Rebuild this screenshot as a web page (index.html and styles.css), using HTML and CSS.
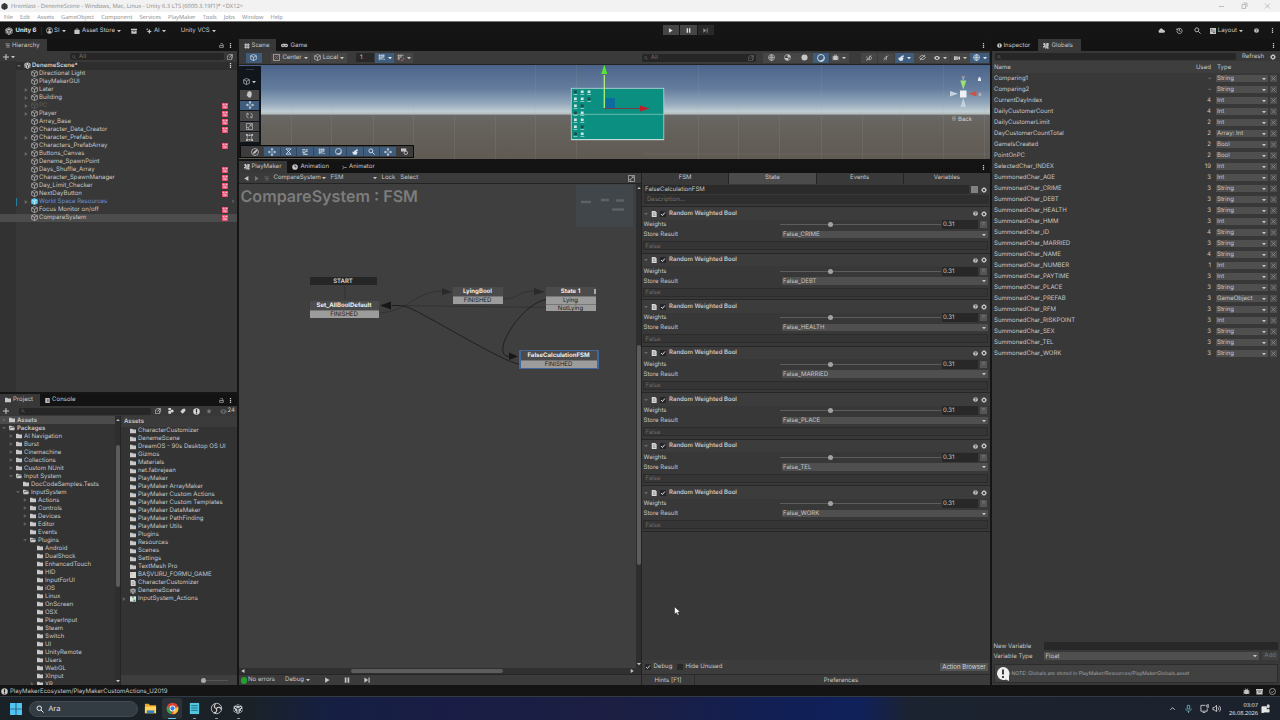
FILE: index.html
```
<!DOCTYPE html>
<html lang="en">
<head>
  <meta charset="UTF-8">
  <meta name="viewport" content="width=device-width, initial-scale=1.0">
  <title>Hremlast - DenemeScene</title>
  <link rel="stylesheet" href="styles.css">
</head>
<body>
  <!-- Icon sprite -->
  <svg class="sprite">
    <symbol id="unity" viewBox="0 0 16 16"><path fill="currentColor" d="M8 0l7 4v8l-7 4-7-4V4z"/><path stroke="#222" stroke-width="1.6" fill="none" d="M8 8v6M8 8L3 5M8 8l5-3M5 3l3-1.500 3 1.500M2.500 8v3l3 2M13.500 8v3l-3 2"/></symbol>
    <symbol id="cube" viewBox="0 0 16 16"><path fill="none" stroke="currentColor" stroke-width="1.500" d="M8 1l6.500 3v8L8 15l-6.500-3V4zM1.500 4L8 7.500 14.500 4M8 7.500V15"/></symbol>
    <symbol id="prefab" viewBox="0 0 16 16"><path fill="#5fc8ee" d="M8 0l7.500 3.500v9L8 16 .5 12.500v-9z"/><path fill="none" stroke="#d5f3ff" stroke-width="1.800" d="M3 5l5 2.500L13 5M8 7.500V14"/></symbol>
    <symbol id="folder" viewBox="0 0 16 16"><path fill="currentColor" d="M0 2h6l2 2h8v10H0z"/></symbol>
    <symbol id="folder-open" viewBox="0 0 16 16"><path fill="currentColor" d="M0 2h6l2 2h6v2H3L1.500 12 0 14zM4 7h12l-2 7H1.500z"/></symbol>
    <symbol id="pm" viewBox="0 0 16 16"><path fill="currentColor" d="M1 0h5v3h3V0h6v9h-3l4 4-3 3-4-4v3H6v-3H0V8h3V5H1z"/><path stroke="#444" d="M6 5h4M6 8h5M5 11h3"/></symbol>
    <symbol id="pm-red" viewBox="0 0 16 16"><path fill="#e8476d" d="M0 0h16v16H0z"/><path fill="#f6d5dc" d="M2 2h3v3H2zM7 2h2v3H7zM11 2h3v4h-3zM2 7h7v2H2zM4 11h3v3H4zM9 8l5 4-3 .5-2 2z"/></symbol>
    <symbol id="search" viewBox="0 0 16 16"><path fill="none" stroke="currentColor" stroke-width="2" d="M10 10l5 5M11 6.500a4.500 4.500 0 11-9 0 4.500 4.500 0 019 0z"/></symbol>
    <symbol id="gear" viewBox="0 0 16 16"><circle cx="8" cy="8" r="4.500" fill="none" stroke="currentColor" stroke-width="3"/><path stroke="currentColor" stroke-width="2.400" d="M8 0v3M8 13v3M0 8h3M13 8h3M2.300 2.300l2 2M11.700 11.700l2 2M13.700 2.300l-2 2M4.300 11.700l-2 2"/></symbol>
    <symbol id="help" viewBox="0 0 16 16"><circle cx="8" cy="8" r="7.500" fill="currentColor"/><path fill="none" stroke="#222" stroke-width="2" d="M5.500 6.500C5.500 3 10.500 3 10.500 6c0 2-2.500 1.500-2.500 4M8 11v2"/></symbol>
    <symbol id="info" viewBox="0 0 16 16"><circle cx="8" cy="8" r="7.500" fill="currentColor"/><path stroke="#222" stroke-width="2.600" d="M8 3v6M8 10.500v2.500"/></symbol>
    <symbol id="dots" viewBox="0 0 16 16"><path fill="currentColor" d="M6 0h4v4H6zM6 6h4v4H6zM6 12h4v4H6z"/></symbol>
    <symbol id="lock" viewBox="0 0 16 16"><path fill="none" stroke="currentColor" stroke-width="2" d="M2 8h12v6H2zM4 4c1-4 8-4 8 0v4"/></symbol>
    <symbol id="down" viewBox="0 0 16 16"><path fill="currentColor" d="M0 4h16l-8 9z"/></symbol>
    <symbol id="right" viewBox="0 0 16 16"><path fill="currentColor" d="M3 0l12 8-12 8z"/></symbol>
    <symbol id="left" viewBox="0 0 16 16"><path fill="currentColor" d="M14 0L1 8l13 8z"/></symbol>
    <symbol id="up" viewBox="0 0 16 16"><path fill="currentColor" d="M1 12h14L8 4z"/></symbol>
    <symbol id="lines" viewBox="0 0 16 16"><path stroke="currentColor" stroke-width="2" d="M1 3h14M4 8h11M4 13h11"/></symbol>
    <symbol id="plus" viewBox="0 0 16 16"><path stroke="currentColor" stroke-width="2.800" d="M8 0v16M0 8h16"/></symbol>
    <symbol id="user" viewBox="0 0 16 16"><circle cx="8" cy="8" r="6.800" fill="none" stroke="currentColor" stroke-width="1.700"/><circle cx="8" cy="6" r="2.600" fill="currentColor"/><path fill="currentColor" d="M3 12c2-4 8-4 10 0l-5 3z"/></symbol>
    <symbol id="bag" viewBox="0 0 16 16"><path fill="currentColor" d="M1 5h14v11H1z"/><path fill="none" stroke="currentColor" stroke-width="2" d="M5 6c0-6 6-6 6 0"/></symbol>
    <symbol id="archive" viewBox="0 0 16 16"><path fill="currentColor" d="M0 2h16v4H0zM1 7h14v8H1z"/><path stroke="#222" stroke-width="1.500" d="M5 9h6"/></symbol>
    <symbol id="spark" viewBox="0 0 16 16"><path fill="currentColor" d="M9 2l2 5 5 2-5 2-2 5-2-5-5-2 5-2zM3 0l1 2 2 1-2 1-1 2-1-2-2-1 2-1z"/></symbol>
    <symbol id="play" viewBox="0 0 16 16"><path fill="currentColor" d="M3 1l12 7-12 7z"/></symbol>
    <symbol id="pause" viewBox="0 0 16 16"><path fill="currentColor" d="M2 1h4.500v14H2zM9.500 1H14v14H9.500z"/></symbol>
    <symbol id="step" viewBox="0 0 16 16"><path fill="currentColor" d="M1 1l10 7-10 7zM12 1h3v14h-3z"/></symbol>
    <symbol id="cloud" viewBox="0 0 16 16"><path fill="currentColor" d="M3 13a3.500 3.500 0 010-6c1-5 8-5 9 0 5 0 5 6 1 6z"/></symbol>
    <symbol id="history" viewBox="0 0 16 16"><path fill="none" stroke="currentColor" stroke-width="1.700" d="M2 3v4h4M2.500 6.500A6 6 0 112 9M8 4.500V9l3 1.500"/></symbol>
    <symbol id="layers" viewBox="0 0 16 16"><path fill="currentColor" d="M0 0h16v16H0z"/><path stroke="#333" stroke-width="1.500" d="M2 4h5M2 8h12M8 12h6"/></symbol>
    <symbol id="grid" viewBox="0 0 16 16"><path fill="none" stroke="currentColor" stroke-width="1.500" d="M1 3h14M1 7h14M1 11h8M4 1v13M9 1v11M13 1v7M10 14l3-3 3 3"/></symbol>
    <symbol id="magnet" viewBox="0 0 16 16"><path fill="none" stroke="currentColor" stroke-width="1.500" d="M1 3h14M1 7h9M1 11h6M4 1v13M9 1v7"/><path fill="none" stroke="#cf6257" stroke-width="2" d="M9 14l3 1 3-3-1-4"/></symbol>
    <symbol id="gamepad" viewBox="0 0 16 16"><path fill="currentColor" d="M4 4h8a4 4 0 010 8c-2 0-2-2-4-2s-2 2-4 2a4 4 0 010-8z"/><circle cx="4.500" cy="8" r="1.500" fill="#222"/><circle cx="11.500" cy="8" r="1.500" fill="#222"/></symbol>
    <symbol id="scene" viewBox="0 0 16 16"><path stroke="currentColor" stroke-width="2" d="M4 1v14M8 1v14M12 1v14M1 4h14M1 8h14M1 12h14"/></symbol>
    <symbol id="clock" viewBox="0 0 16 16"><circle cx="8" cy="8" r="7.500" fill="currentColor"/><path fill="none" stroke="#222" stroke-width="2" d="M8 3v5h4"/></symbol>
    <symbol id="animator" viewBox="0 0 16 16"><path fill="none" stroke="currentColor" stroke-width="2" d="M1 3l6 5-6 5M7 8h8"/></symbol>
    <symbol id="console" viewBox="0 0 16 16"><path fill="currentColor" d="M1 0h14v16H1z"/><path stroke="#222" stroke-width="1.700" d="M6 4h6M6 8h6M6 12h6"/></symbol>
    <symbol id="window" viewBox="0 0 16 16"><path fill="none" stroke="currentColor" stroke-width="1.600" d="M4 1h11v11M1 5v10h11V8M1 5h5M6 10l7-7M9 3h4v4"/></symbol>
    <symbol id="tag" viewBox="0 0 16 16"><path fill="currentColor" d="M8 2h6v6l-7 7-6-6z"/></symbol>
    <symbol id="shapes" viewBox="0 0 16 16"><path fill="currentColor" d="M1 0h7v6H1zM1 8h7v7H1z"/><circle cx="11" cy="8" r="4" fill="currentColor"/></symbol>
    <symbol id="star" viewBox="0 0 16 16"><path fill="currentColor" d="M8 1l2 5 5 .5-4 3.500 1 5-4-2.500L4 15l1-5-4-3.500L6 6z"/></symbol>
    <symbol id="eye" viewBox="0 0 16 16"><path fill="currentColor" d="M0 8c4-7 12-7 16 0-4 7-12 7-16 0z"/><circle cx="8" cy="8" r="2.500" fill="#333"/></symbol>
    <symbol id="eye-off" viewBox="0 0 16 16"><path fill="none" stroke="currentColor" stroke-width="1.800" d="M1 8c4-6 10-6 14 0-4 6-10 6-14 0zM2 14L14 2"/></symbol>
    <symbol id="hand" viewBox="0 0 16 16"><path fill="currentColor" d="M3 8V3h2V1h2V0h2v1h2v2h2v6l-2 6H6L1 9l1-1z"/></symbol>
    <symbol id="move" viewBox="0 0 16 16"><path stroke="currentColor" stroke-width="1.600" d="M8 2v4.500M8 9.500V14M2 8h4.500M9.500 8H14"/><path fill="currentColor" d="M8 0l3 3H5zM8 16l3-3H5zM0 8l3-3v6zM16 8l-3-3v6z"/></symbol>
    <symbol id="rotate" viewBox="0 0 16 16"><path fill="none" stroke="currentColor" stroke-width="1.600" d="M6 14A6.300 6.300 0 014 3M10 2a6.300 6.300 0 012 11M1 3h4v4M15 13h-4V9"/></symbol>
    <symbol id="scale" viewBox="0 0 16 16"><path fill="none" stroke="currentColor" stroke-width="1.500" d="M1 1h14v14H1zM1 10h5v5M7 9l5-5M8 4h4v4"/></symbol>
    <symbol id="pivot" viewBox="0 0 16 16"><path fill="none" stroke="currentColor" stroke-width="1.500" d="M1 1h14v14H1z"/><path stroke="#a8665c" stroke-width="1.800" d="M3 13L13 3M5 5l6 6"/></symbol>
    <symbol id="rect" viewBox="0 0 16 16"><path fill="none" stroke="currentColor" stroke-width="1.300" d="M3 3h10v10H3z"/><path fill="currentColor" d="M0 0h4v4H0zM12 0h4v4h-4zM0 12h4v4H0zM12 12h4v4h-4zM6.500 1h3v3h-3zM6.500 12h3v3h-3z"/></symbol>
    <symbol id="pencil" viewBox="0 0 16 16"><circle cx="8" cy="8" r="7" fill="none" stroke="currentColor" stroke-width="1.500"/><path fill="currentColor" d="M4 12l1-4 6-5 2 2-5 6z"/></symbol>
    <symbol id="bone" viewBox="0 0 16 16"><path fill="none" stroke="currentColor" stroke-width="1.800" d="M2 2h12M2 14h12M3 3l10 10M13 3L3 13"/></symbol>
    <symbol id="terrain" viewBox="0 0 16 16"><path stroke="currentColor" stroke-width="2.500" d="M1 2h7M10 2h5M1 6h3M7 6h8M1 10h8M3 14h12"/></symbol>
    <symbol id="sphere" viewBox="0 0 16 16"><circle cx="8" cy="8" r="7" fill="none" stroke="currentColor" stroke-width="1.700"/><path fill="currentColor" d="M13 4c1 6-3 9-9 9 4 4 12 0 9-9z"/></symbol>
    <symbol id="globe" viewBox="0 0 16 16"><circle cx="8" cy="8" r="6.800" fill="none" stroke="currentColor" stroke-width="1.500"/><path fill="none" stroke="currentColor" stroke-width="1.300" d="M1 8h14M8 1v14M8 1c-4 3-4 11 0 14M8 1c4 3 4 11 0 14"/></symbol>
    <symbol id="disc" viewBox="0 0 16 16"><circle cx="8" cy="8" r="7" fill="currentColor"/></symbol>
    <symbol id="shaded" viewBox="0 0 16 16"><circle cx="8" cy="8" r="6.800" fill="none" stroke="currentColor" stroke-width="1.500"/><path fill="currentColor" d="M8 1a7 7 0 017 7H8zM1 9h9v5H5z"/></symbol>
    <symbol id="bug" viewBox="0 0 16 16"><circle cx="8" cy="9" r="5.500" fill="currentColor"/><path stroke="currentColor" stroke-width="1.500" d="M1 5l14 9M15 5L1 14M0 9.500h16M5 1l2 4M11 1L9 5"/></symbol>
    <symbol id="twod" viewBox="0 0 16 16"><path fill="none" stroke="currentColor" stroke-width="1.700" d="M1 4l5 8H1M9 3h2c5 1 5 9 0 10H9zM2 15L14 1"/></symbol>
    <symbol id="mute" viewBox="0 0 16 16"><path fill="none" stroke="currentColor" stroke-width="1.600" d="M2 15L14 1M5 7l4-4v11M2 9h4"/></symbol>
    <symbol id="fx" viewBox="0 0 16 16"><path fill="currentColor" d="M1 7h4l3-4h4v4h3l-3 8H6L2 13z"/><circle cx="13" cy="3" r="2.500" fill="currentColor"/></symbol>
    <symbol id="camera" viewBox="0 0 16 16"><path fill="currentColor" d="M0 3h5v10H0zM6 3h4v10H6zM11 6l5-3v10l-5-3z"/></symbol>
    <symbol id="chat" viewBox="0 0 16 16"><path fill="currentColor" d="M0 1h12v7H0z"/><circle cx="11" cy="11" r="4" fill="none" stroke="currentColor" stroke-width="2"/></symbol>
    <symbol id="check" viewBox="0 0 16 16"><path fill="none" stroke="currentColor" stroke-width="2.600" d="M3 8l3.500 4L13 4"/></symbol>
    <symbol id="doc" viewBox="0 0 16 16"><path fill="#d9d9d9" d="M2 0h9l4 4v12H2z"/><path stroke="#777" stroke-width="1.500" d="M5 5h6M5 8h7M5 12h7"/></symbol>
    <symbol id="note" viewBox="0 0 16 16"><path fill="#d8d8cf" d="M0 0h16v16H0z"/><path stroke="#8b8b80" stroke-width="1.500" d="M3 4h3"/></symbol>
    <symbol id="actions" viewBox="0 0 16 16"><path fill="#dfe6e2" d="M0 1h16v14H0z"/><path fill="#3a9c7a" d="M6 1h4v5H6zM9 9h5v4H9z"/></symbol>
    <symbol id="circle-check" viewBox="0 0 16 16"><path fill="none" stroke="currentColor" stroke-width="1.500" d="M15 8A7 7 0 111 8a7 7 0 0114 0zM5 8l2 3 5-5"/></symbol>
  </svg>

  <header class="title-bar">
    <svg class="icon app-icon"><use href="#unity"/></svg>
    <span>Hremlast - DenemeScene - Windows, Mac, Linux - Unity 6.3 LTS (6000.3.19f1)* &lt;DX12&gt;</span>
    <svg class="window-buttons" viewBox="0 0 56 8"><path d="M0 4.500h5M23 2.500h3.500v4H23zM24.500 1H28v4M46 1.500l5 5M51 1.500l-5 5"/></svg>
  </header>
  <nav class="menu-bar">
    <span>File</span><span>Edit</span><span>Assets</span><span>GameObject</span><span>Component</span><span>Services</span><span>PlayMaker</span><span>Tools</span><span>Jobs</span><span>Window</span><span>Help</span>
  </nav>

  <div class="main-toolbar">
    <div class="toolbar-left">
      <svg class="icon icon-8"><use href="#unity"/></svg><b>Unity 6</b><i class="divider"></i>
      <svg class="icon icon-7"><use href="#user"/></svg><span>SI</span><svg class="icon icon-4"><use href="#down"/></svg>
      <svg class="icon store"><use href="#bag"/></svg><span>Asset Store</span><svg class="icon icon-4"><use href="#down"/></svg>
      <svg class="icon box"><use href="#archive"/></svg>
      <svg class="icon ai"><use href="#spark"/></svg><span>AI</span><svg class="icon icon-4"><use href="#down"/></svg>
      <span class="vcs">Unity VCS</span><svg class="icon icon-4"><use href="#down"/></svg>
    </div>
    <div class="play-controls">
      <button><svg class="icon icon-5"><use href="#play"/></svg></button>
      <button><svg class="icon icon-5"><use href="#pause"/></svg></button>
      <button class="off"><svg class="icon icon-5"><use href="#step"/></svg></button>
    </div>
    <div class="toolbar-right">
      <svg class="icon icon-7"><use href="#cloud"/></svg>
      <svg class="icon icon-7"><use href="#history"/></svg>
      <svg class="icon icon-7"><use href="#search"/></svg>
      <div class="layout"><svg class="icon icon-6"><use href="#layers"/></svg>Layout<svg class="icon icon-4"><use href="#down"/></svg></div>
      <svg class="icon icon-5"><use href="#help"/></svg>
      <svg class="icon icon-5"><use href="#dots"/></svg>
    </div>
  </div>

  <main class="workspace">
    <div class="column-left">
      <section class="hierarchy">
        <div class="tabs">
          <div class="tab active"><svg class="icon icon-5"><use href="#lines"/></svg>Hierarchy</div>
          <div class="tab-actions"><svg class="icon icon-5"><use href="#lock"/></svg><svg class="icon icon-5"><use href="#dots"/></svg></div>
        </div>
        <div class="tools">
          <svg class="icon icon-6"><use href="#plus"/></svg><svg class="icon icon-4"><use href="#down"/></svg>
          <div class="search"><svg class="icon icon-4"><use href="#search"/></svg>All</div>
          <svg class="icon icon-6"><use href="#window"/></svg>
        </div>
        <div id="hierarchyList" class="hierarchy-list"></div>
      </section>

      <section class="project">
        <div class="tabs">
          <div class="tab active"><svg class="icon icon-6"><use href="#folder"/></svg>Project</div>
          <div class="tab"><svg class="icon icon-5"><use href="#console"/></svg>Console</div>
          <div class="tab-actions"><svg class="icon icon-5"><use href="#lock"/></svg><svg class="icon icon-5"><use href="#dots"/></svg></div>
        </div>
        <div class="tools">
          <svg class="icon icon-6"><use href="#plus"/></svg>
          <div class="search"><svg class="icon icon-4"><use href="#search"/></svg></div>
          <div class="filters">
            <svg class="icon icon-6"><use href="#window"/></svg>
            <svg class="icon icon-6"><use href="#shapes"/></svg>
            <svg class="icon icon-6"><use href="#tag"/></svg>
            <svg class="icon icon-7"><use href="#info"/></svg>
            <svg class="icon icon-6 dim"><use href="#star"/></svg>
          </div>
          <span class="hidden-count"><svg class="icon icon-7"><use href="#eye"/></svg>24</span>
        </div>
        <div class="project-body">
          <div id="projectTree" class="project-tree"></div>
          <div class="scroll-y"><svg class="icon icon-4"><use href="#up"/></svg><i class="thumb"></i><svg class="icon icon-4"><use href="#down"/></svg></div>
          <div class="project-files">
            <div class="path">Assets</div>
            <div id="fileList" class="file-list"></div>
            <div class="zoom-bar"><i></i></div>
          </div>
        </div>
      </section>
    </div>

    <div class="column-center">
      <section class="scene">
        <div class="tabs">
          <div class="tab active"><svg class="icon icon-6"><use href="#scene"/></svg>Scene</div>
          <div class="tab"><svg class="icon icon-7"><use href="#gamepad"/></svg>Game</div>
          <div class="tab-actions"><svg class="icon icon-5"><use href="#dots"/></svg></div>
        </div>
        <div class="scene-tools">
          <div class="tool on first"><svg class="icon icon-7"><use href="#cube"/></svg></div>
          <div class="tool pivot"><svg class="icon icon-7"><use href="#pivot"/></svg><span>Center</span><svg class="icon icon-4"><use href="#down"/></svg></div>
          <div class="tool local"><svg class="icon icon-7"><use href="#cube"/></svg><span>Local</span><svg class="icon icon-4"><use href="#down"/></svg></div>
          <div class="snap">1</div>
          <div class="tool on wide"><svg class="icon icon-7"><use href="#grid"/></svg><svg class="icon icon-4"><use href="#down"/></svg></div>
          <div class="tool wide"><svg class="icon icon-7"><use href="#magnet"/></svg><svg class="icon icon-4"><use href="#down"/></svg></div>
          <div class="search"><svg class="icon icon-4"><use href="#search"/></svg><span>All</span><svg class="icon icon-6"><use href="#window"/></svg></div>
          <div class="draw-modes">
            <div class="tool"><svg class="icon icon-7"><use href="#globe"/></svg></div>
            <div class="tool"><svg class="icon icon-7"><use href="#shaded"/></svg></div>
            <div class="tool"><svg class="icon icon-7"><use href="#disc"/></svg></div>
            <div class="tool on"><svg class="icon icon-8"><use href="#sphere"/></svg></div>
            <div class="tool wide"><svg class="icon icon-7"><use href="#bug"/></svg><svg class="icon icon-4"><use href="#down"/></svg></div>
          </div>
          <div class="view-modes">
            <div class="tool"><svg class="icon icon-6"><use href="#twod"/></svg></div>
            <div class="tool"><svg class="icon icon-6"><use href="#mute"/></svg></div>
            <div class="tool on wide"><svg class="icon icon-6"><use href="#fx"/></svg><svg class="icon icon-4"><use href="#down"/></svg></div>
            <div class="tool"><svg class="icon icon-7"><use href="#eye-off"/></svg></div>
            <div class="tool wide"><svg class="icon icon-6"><use href="#eye"/></svg><svg class="icon icon-4"><use href="#down"/></svg></div>
            <div class="tool wide"><svg class="icon icon-6"><use href="#camera"/></svg><svg class="icon icon-4"><use href="#down"/></svg></div>
            <div class="tool on wide"><svg class="icon icon-7"><use href="#globe"/></svg><svg class="icon icon-4"><use href="#down"/></svg></div>
          </div>
        </div>
        <div class="viewport">
          <svg class="scene-view" viewBox="238.500 65 751.500 94" preserveAspectRatio="none">
            <defs>
              <linearGradient id="sky" x1="0" y1="0" x2="0" y2="1">
                <stop offset="0" stop-color="#4b6389"/><stop offset=".5" stop-color="#667f9f"/><stop offset=".78" stop-color="#93a8bc"/><stop offset=".95" stop-color="#c0cdd2"/><stop offset="1" stop-color="#b4bcbc"/>
              </linearGradient>
              <linearGradient id="ground" x1="0" y1="0" x2="0" y2="1">
                <stop offset="0" stop-color="#696967"/><stop offset=".3" stop-color="#66625c"/><stop offset="1" stop-color="#5f5a52"/>
              </linearGradient>
            </defs>
            <rect x="238" y="65" width="752" height="49" fill="url(#sky)"/>
            <rect x="238" y="114" width="752" height="45" fill="url(#ground)"/>
            <path class="grid-line" d="M291 100v59M331 104v55M373 108v51M413 102v57M454 115v44M495 115v44M535 65v94M576 65v94M698 65v94M738 106v53M779 115v44M821 65v94M862 108v51M902 104v55M943 65v94M984 102v57M642 154h348"/>
            <path fill="none" stroke="#b7c4c0" stroke-width=".7" d="M239 114.300h751"/>
            <rect x="570.800" y="88.300" width="92.500" height="51.500" fill="#0b8f80" stroke="#b8d6d3" stroke-width=".8"/>
            <path stroke="#8fd0c6" stroke-width=".7" d="M571 114.300h92"/>
            <path stroke="#c2d9d5" stroke-width="1.200" d="M571 139.500h92"/>
            <g id="desktopIcons"></g>
            <rect x="605" y="98" width="9.500" height="10" fill="#0d6c9f"/>
            <path stroke="#b0ef7a" stroke-width="1.300" d="M603.800 75v33"/>
            <path fill="#55e82e" d="M603.800 64.500l3 9.500h-6z"/>
            <path stroke="#7b3d45" d="M604 108.500h37"/>
            <path fill="#c01c2c" d="M649 108.500l-9.500 3v-6z"/>
            <path fill="#9be276" d="M959.800 80.500h6l-3 9z"/>
            <path fill="#c5d1dc" d="M949.500 91v5.500l8-2.700zM960 107h5.500l-2.700-9z"/>
            <path fill="#cc5147" d="M968 93.700l8-2.700v5.400z"/>
            <path fill="#eef1f3" d="M959.500 90.500h6.500v7h-6.500z"/>
            <path fill="#e2e8ee" d="M977.500 78.500h3v2.500h-3zM978.200 77h1.600v2h-1.600z"/>
            <path stroke="#b0aeab" stroke-width=".7" d="M951.500 117h4M951.500 118.500h4M951.500 120h4"/>
            <text class="gizmo-text" x="961" y="78.500">y</text>
            <text class="gizmo-text" x="977.800" y="95.800">x</text>
            <text class="gizmo-text" x="957.500" y="121">Back</text>
          </svg>
          <div class="tool-overlay">
            <i class="handle"></i>
            <div class="pick"><svg class="icon icon-7"><use href="#cube"/></svg><svg class="icon icon-4"><use href="#down"/></svg></div>
            <div class="tool"><svg class="icon icon-7"><use href="#hand"/></svg></div>
            <div class="tool on"><svg class="icon icon-8"><use href="#move"/></svg></div>
            <div class="tool"><svg class="icon icon-7"><use href="#rotate"/></svg></div>
            <div class="tool"><svg class="icon icon-7"><use href="#scale"/></svg></div>
            <div class="tool"><svg class="icon icon-7"><use href="#rect"/></svg></div>
          </div>
          <div class="edit-overlay">
            <div class="tool plain"><svg class="icon icon-8"><use href="#pencil"/></svg></div>
            <div class="tool on"><svg class="icon icon-8"><use href="#move"/></svg></div>
            <div class="tool on"><svg class="icon icon-7"><use href="#bone"/></svg></div>
            <div class="tool on"><svg class="icon icon-6"><use href="#terrain"/></svg></div>
            <div class="tool on"><svg class="icon icon-7"><use href="#grid"/></svg></div>
            <div class="tool on"><svg class="icon icon-7"><use href="#sphere"/></svg></div>
            <div class="tool on"><svg class="icon icon-6"><use href="#fx"/></svg></div>
            <div class="tool on"><svg class="icon icon-7"><use href="#search"/></svg></div>
            <div class="tool on"><svg class="icon icon-8"><use href="#move"/></svg></div>
            <div class="tool plain"><svg class="icon icon-7"><use href="#chat"/></svg></div>
          </div>
        </div>
      </section>

      <section class="playmaker">
        <div class="tabs">
          <div class="tab active"><svg class="icon icon-6"><use href="#pm"/></svg>PlayMaker</div>
          <div class="tab"><svg class="icon icon-6"><use href="#clock"/></svg>Animation</div>
          <div class="tab"><svg class="icon icon-5"><use href="#animator"/></svg>Animator</div>
          <div class="tab-actions"><svg class="icon icon-5"><use href="#dots"/></svg></div>
        </div>
        <div class="playmaker-body">
          <div class="graph-pane">
            <div class="graph-bar">
              <svg class="icon icon-5"><use href="#left"/></svg>
              <svg class="icon icon-5 dim"><use href="#right"/></svg>
              <svg class="icon icon-5 dim"><use href="#lines"/></svg>
              <span class="drop object">CompareSystem<svg class="icon icon-4"><use href="#down"/></svg></span>
              <span class="drop fsm">FSM<svg class="icon icon-4"><use href="#down"/></svg></span>
              <span class="cell">Lock</span><span class="cell">Select</span>
              <svg class="icon icon-7 minimap-toggle"><use href="#scale"/></svg>
            </div>
            <div class="graph-row">
              <div class="graph">
                <h1>CompareSystem : FSM</h1>
                <svg class="links" viewBox="239 184 398 484">
                  <path class="link faint" d="M345 286v13M380 313c28-1 35-22 62-22M503 299c17 0 13-8 31-8M546 307.500L392 305.500"/>
                  <path class="link" d="M546 299.500c-20 3-46 39-43 52 .5 3.500 3 5 7 5M519 364c-15-1-95-51-112-57-7-2-10-1.500-15-1.500"/>
                  <path class="head faint" d="M452 292l-10-4v7zM545 292l-11-4v7z"/>
                  <path class="head" d="M380 305.500l11-4v8zM518 356.500l-9-4v7.500z"/>
                </svg>
                <svg class="minimap" viewBox="0 0 57 42"><rect width="57" height="42"/><path d="M5 17h10M25 15h8M40 15.500h8M36 24.500h12"/></svg>
                <div class="start">START</div>
                <div class="node set-default"><b>Set_AllBoolDefault</b><span>FINISHED</span></div>
                <div class="node lying-bool"><b>LyingBool</b><span>FINISHED</span></div>
                <div class="node state-one"><b>State 1</b><span>Lying</span><span>NotLying</span></div>
                <div class="node calculation"><b>FalseCalculationFSM</b><span>FINISHED</span></div>
              </div>
              <div class="scroll-y"><svg class="icon icon-4"><use href="#up"/></svg><i class="thumb"></i><svg class="icon icon-4"><use href="#down"/></svg></div>
            </div>
            <div class="scroll-x"><svg class="icon icon-4"><use href="#left"/></svg><i class="thumb"></i><svg class="icon icon-4"><use href="#right"/></svg></div>
            <div class="debug-bar">
              <i class="ok"></i><span>No errors</span>
              <span class="debug">Debug<svg class="icon icon-4"><use href="#down"/></svg></span>
              <svg class="icon icon-6"><use href="#play"/></svg>
              <svg class="icon icon-6"><use href="#pause"/></svg>
              <svg class="icon icon-6"><use href="#step"/></svg>
            </div>
          </div>

          <div class="state-pane">
            <div class="state-tabs"><span>FSM</span><span class="active">State</span><span>Events</span><span>Variables</span></div>
            <div class="state-name"><div class="field">FalseCalculationFSM</div><i class="swatch"></i><svg class="icon icon-6"><use href="#gear"/></svg></div>
            <div class="description">Description...</div>
            <div id="actionList" class="action-list"></div>
            <div class="state-options">
              <i class="box"><svg class="icon icon-6"><use href="#check"/></svg></i><span>Debug</span>
              <i class="box"></i><span>Hide Unused</span>
              <button>Action Browser</button>
            </div>
            <div class="state-footer"><span>Hints [F1]</span><span>Preferences</span></div>
          </div>
        </div>
      </section>
    </div>

    <section class="globals">
      <div class="tabs">
        <div class="tab"><svg class="icon icon-5"><use href="#info"/></svg>Inspector</div>
        <div class="tab active"><svg class="icon icon-6"><use href="#pm"/></svg>Globals</div>
        <div class="tab-actions"><svg class="icon icon-5"><use href="#dots"/></svg></div>
      </div>
      <div class="tools">
        <div class="search"><svg class="icon icon-4"><use href="#search"/></svg></div>
        <span class="refresh">Refresh</span>
        <svg class="icon icon-6"><use href="#gear"/></svg>
      </div>
      <div class="globals-head"><span>Name</span><span>Used</span><span>Type</span></div>
      <div id="globalsList" class="globals-list"></div>
      <div class="new-variable">
        <label>New Variable</label><div class="field"></div>
      </div>
      <div class="new-variable">
        <label>Variable Type</label><div class="select"><span>Float</span><svg class="icon icon-4"><use href="#down"/></svg></div><span class="add">Add</span>
      </div>
      <div class="note">
        <svg viewBox="0 0 14 14"><path fill="#f0f0f0" d="M7 0a6.500 6.500 0 016 9v5l-3-1.500A6.500 6.500 0 117 0z"/><path stroke="#222" stroke-width="1.700" d="M7 2.500v5M7 9v2"/></svg>
        <span>NOTE: Globals are stored in PlayMaker/Resources/PlayMakerGlobals.asset</span>
      </div>
    </section>
  </main>

  <footer class="status-bar">
    <svg class="icon icon-7"><use href="#info"/></svg><span>PlayMakerEcosystem/PlayMakerCustomActions_U2019</span>
    <div class="status-icons"><svg class="icon icon-7"><use href="#bug"/></svg><svg class="icon icon-7"><use href="#archive"/></svg><svg class="icon icon-7"><use href="#circle-check"/></svg></div>
  </footer>

  <div class="taskbar">
    <svg class="windows" viewBox="0 0 12 12"><path fill="#4fc5f3" d="M0 0h5.700v5.700H0zM6.300 0H12v5.700H6.300zM0 6.300h5.700V12H0zM6.300 6.300H12V12H6.300z"/></svg>
    <div class="task-search"><svg class="icon icon-8"><use href="#search"/></svg>Ara</div>
    <div class="task"><svg viewBox="0 0 14 14"><path fill="#e9a72b" d="M1 2h4l1.500 1.500H13V12H1z"/><path fill="#ffd75e" d="M1 5h12v7H1z"/><path fill="#2f83c5" d="M3 9h8v3H3z"/></svg></div>
    <div class="task current"><svg viewBox="0 0 14 14"><circle cx="7" cy="7" r="6.300" fill="#dc4437"/><path fill="#2da14c" d="M1.500 4L7 13.300A6.300 6.300 0 011.500 4z"/><path fill="#f8c62e" d="M7 13.300L10 7l3-2a6.300 6.300 0 01-6 8.300z"/><circle cx="7" cy="7" r="3.100" fill="#fff"/><circle cx="7" cy="7" r="2.300" fill="#3b7de0"/></svg></div>
    <div class="task open"><svg viewBox="0 0 14 14"><path fill="#52c7dd" d="M2 1h10v12H2z"/><path stroke="#166b85" d="M3.500 4h7M3.500 6.500h7M3.500 9h7"/></svg></div>
    <div class="task open"><svg viewBox="0 0 14 14"><circle cx="7" cy="7" r="5.600" fill="#25262b" stroke="#d6d6d6" stroke-width=".9"/><path fill="none" stroke="#d6d6d6" stroke-width="1.200" d="M7 7C4 6.500 4 3.500 6 2.500M7 7c2-2.500 5-1 5 1M7 7c1 3-1 5-3 4.500"/></svg></div>
    <div class="task open light"><svg class="icon"><use href="#unity"/></svg></div>
    <div class="tray">
      <svg viewBox="0 0 10 10"><path d="M2.500 6.500L5 4l2.500 2.500"/></svg>
      <svg class="mic" viewBox="0 0 10 10"><path d="M3.700 1.500h2.600v4H3.700zM2 5c0 4 6 4 6 0M5 8v2"/></svg>
      <svg viewBox="0 0 10 10"><path d="M6 1.500H1v6.500h7V5M3 9.500h3M7.500 1H10v2.500H7.500z"/></svg>
      <svg viewBox="0 0 10 10"><path d="M1 4v2.500h1.500L5 8.500v-7L2.500 4zM6.500 3.500c1 1 1 2.500 0 3.500M8 2c2 2 2 4.500 0 6.500"/></svg>
      <div class="date"><span>03:07</span><span>26.08.2026</span></div>
      <svg viewBox="0 0 10 10"><path fill="#e8e8e8" d="M1 3h5v3h3v3H4L1 10zM7 1h2v3H7z"/></svg>
    </div>
  </div>

  <svg class="cursor" viewBox="0 0 12 18"><path fill="#fff" stroke="#222" stroke-width="1" d="M1 1v14l3.500-3 2.500 5 2.500-1.200L7 11h4.500z"/></svg>

  <script src="script.js"></script>
</body>
</html>
```
FILE: styles.css
```
* {
  box-sizing: border-box;
}

body {
  margin: 0;
  width: 1280px;
  height: 720px;
  overflow: hidden;
  display: flex;
  flex-direction: column;
  background: #151515;
  color: #c6c6c6;
  font-family: Inter, sans-serif;
  font-size: 6.050px;
  line-height: 8px;
  white-space: nowrap;
  text-rendering: geometricPrecision;
}

button {
  padding: 0;
  border: none;
  font: inherit;
  color: inherit;
}

.sprite {
  display: none;
}

.icon {
  width: 6px;
  height: 6px;
  flex: none;
  display: block;
}

.icon-4 { width: 4px; height: 4px; }
.icon-5 { width: 5px; height: 5px; }
.icon-7 { width: 7px; height: 7px; }
.icon-8 { width: 8px; height: 8px; }

.dim {
  color: #777;
}

/* Window chrome */
.title-bar {
  height: 12px;
  flex: none;
  display: flex;
  align-items: center;
  background: #f2f2f2;
  color: #8c8c8c;
  font-family: "Open Sans", sans-serif;
  font-size: 5.820px;
}

.app-icon {
  width: 7px;
  height: 7px;
  margin: 0 3px 0 1px;
  color: #444;
}

.window-buttons {
  width: 56px;
  height: 8px;
  margin: 0 5px 0 auto;
  fill: none;
  stroke: #999;
  stroke-width: 0.6;
}

.menu-bar {
  height: 10px;
  flex: none;
  display: flex;
  align-items: center;
  gap: 7px;
  padding-left: 4px;
  background: #fff;
  border-bottom: 1px solid #777;
  color: #888;
  font-family: "Open Sans", sans-serif;
  font-size: 5.700px;
}

.main-toolbar {
  height: 17px;
  flex: none;
  display: flex;
  align-items: center;
  position: relative;
}

.toolbar-left {
  display: flex;
  align-items: center;
  gap: 2.500px;
  padding-left: 5px;
}

.toolbar-left b {
  color: #e2e2e2;
  font-size: 6px;
}

.divider {
  width: 1px;
  height: 8px;
  margin: 0 1px 0 2px;
  background: #2a2a2a;
}

.toolbar-left .icon-7 {
  margin-right: -1px;
}

.store {
  margin-left: 5px;
}

.toolbar-left .box {
  margin: 0 7px;
}

.toolbar-left .ai {
  margin-right: -1px;
}

.vcs {
  margin-left: 12px;
}

.play-controls {
  display: flex;
  gap: 1px;
  position: absolute;
  left: 662.500px;
  top: 3px;
}

.play-controls button {
  width: 16.500px;
  height: 10px;
  display: flex;
  align-items: center;
  justify-content: center;
  background: #454545;
  color: #ddd;
}

.play-controls .off {
  background: #292929;
  color: #888;
}

.toolbar-right {
  display: flex;
  align-items: center;
  gap: 11px;
  margin-left: auto;
  padding-right: 5px;
}

.layout {
  display: flex;
  align-items: center;
  gap: 2px;
  margin-left: -2px;
}

/* Docked windows */
.workspace {
  height: 646px;
  flex: none;
  display: flex;
  gap: 1.500px;
}

.tabs {
  height: 12px;
  flex: none;
  display: flex;
  background: #131313;
}

.tab {
  display: flex;
  align-items: center;
  gap: 2px;
  padding: 1.500px 7px 0 5px;
}

.tab.active {
  background: #383838;
}

.tab-actions {
  display: flex;
  align-items: center;
  gap: 4px;
  margin-left: auto;
  padding: 1px 4px 0 0;
}

.tools {
  height: 10px;
  flex: none;
  display: flex;
  align-items: center;
  gap: 2px;
  padding: 1px 4px 0 3px;
  background: #383838;
}

.search {
  height: 7px;
  display: flex;
  align-items: center;
  gap: 3px;
  padding: 0 2px;
  background: #262626;
  border-radius: 2px;
  color: #6e6e6e;
}

.column-left {
  width: 237px;
  flex: none;
  display: flex;
  flex-direction: column;
  gap: 1.500px;
}

.hierarchy {
  height: 353px;
  display: flex;
  flex-direction: column;
}

.hierarchy .tools .search {
  width: 154px;
  margin: 0 1px 0 auto;
}

.hierarchy-list {
  flex: 1;
  padding-top: 0.500px;
  background: linear-gradient(90deg, #323232 16px, #383838 16px);
}

.tree-row {
  height: 8px;
  display: flex;
  align-items: center;
  position: relative;
}

.tree-row span {
  padding-top: 1.500px;
}

.tree-row .arrow {
  width: 4px;
  height: 4px;
  margin-right: 3px;
  color: #686868;
}

.tree-row .arrow.none {
  visibility: hidden;
}

.tree-row .icon + span {
  margin-left: 2px;
}

.hierarchy-list .tree-row {
  padding-left: 24px;
}

.hierarchy-list .icon-7 + span {
  margin-left: 1px;
}

.hierarchy-list .marker {
  margin: 0 9px 0 auto;
}

.hierarchy-list .scene-row {
  margin-left: 16px;
  padding-left: 1px;
  background: #2e2e2e;
  color: #d8d8d8;
  font-weight: 600;
}

.hierarchy-list .scene-row .marker {
  width: 5px;
  height: 5px;
  margin-right: 4px;
}

.hierarchy-list .off {
  color: #5e5e5e;
}

.hierarchy-list .prefab {
  color: #6d8fd6;
  background: linear-gradient(90deg, transparent 16px, #287fa5 16px, #287fa5 17px, transparent 17px);
}

.prefab .more {
  margin: 0 3px 0 auto;
  color: #999;
}

.hierarchy-list .selected {
  background: #4c4c4c;
}

.project {
  flex: 1;
  min-height: 0;
  display: flex;
  flex-direction: column;
}

.project .search {
  width: 132px;
  margin-left: 8px;
}

.filters {
  display: flex;
  align-items: center;
  gap: 6.500px;
  margin: 0 auto 0 2px;
  color: #d5d5d5;
}

.hidden-count {
  display: flex;
  align-items: center;
  gap: 1px;
  margin-right: -2px;
}

.hidden-count .icon {
  color: #666;
}

.project-body {
  flex: 1;
  min-height: 0;
  margin-top: 0.500px;
  display: flex;
  background: #333;
}

.project-tree {
  width: 115px;
  overflow: hidden;
}

.project-tree .icon,
.file-list .icon {
  color: #c8c8c8;
}

.project-tree .arrow,
.file-list .arrow {
  color: #606060;
}

.project-tree .selected {
  background: #4b4b4b;
}

.project-tree .strong {
  font-weight: 600;
}

.depth-0 { padding-left: 2px; }
.depth-1 { padding-left: 9px; }
.depth-2 { padding-left: 16px; }
.depth-3 { padding-left: 23px; }
.depth-4 { padding-left: 30px; }

.scroll-y {
  width: 5px;
  flex: none;
  display: flex;
  flex-direction: column;
  align-items: center;
  justify-content: space-between;
  padding: 2px 0;
  background: #2e2e2e;
}

.scroll-y .thumb {
  width: 4px;
  height: 142px;
  margin-bottom: 70px;
  border-radius: 2px;
  background: #5c5c5c;
}

.project-files {
  flex: 1;
  min-width: 0;
  display: flex;
  flex-direction: column;
  border-left: 1px solid #252525;
}

.path {
  height: 10.500px;
  padding: 1.500px 0 0 3px;
  background: #3b3b3b;
  font-weight: 600;
}

.file-list {
  flex: 1;
}

.file-list .tree-row {
  padding-left: 1px;
}

.file-list .arrow {
  margin-right: 4px;
}

.zoom-bar {
  height: 10px;
  padding: 4.500px 9px 0 83px;
  background: #3e3e3e;
}

.zoom-bar i {
  display: block;
  height: 1px;
  background: #555;
}

.zoom-bar i::before {
  content: "";
  display: block;
  width: 5px;
  height: 5px;
  border-radius: 50%;
  background: #aaa;
  transform: translate(-3px, -2px);
}

/* Scene view */
.column-center {
  width: 751.500px;
  flex: none;
  display: flex;
  flex-direction: column;
}

.scene {
  height: 120px;
  flex: none;
}

.scene-tools {
  height: 14px;
  display: flex;
  align-items: center;
  padding: 0 1px 0 7px;
  background: #3a3a3a;
  border-bottom: 1px solid #222;
}

.tool {
  width: 16.500px;
  height: 10px;
  display: flex;
  align-items: center;
  justify-content: center;
  gap: 3px;
  background: #464646;
}

.tool span {
  padding-top: 1px;
}

.tool.on {
  background: #3f5c7c;
  color: #e0e8f0;
}

.tool.wide {
  width: 19px;
}

.tool.pivot {
  width: 39px;
  margin: 0 1px 0 9px;
  gap: 2px;
}

.tool.local {
  width: 36px;
  gap: 2px;
}

.snap {
  width: 18px;
  height: 9px;
  margin: 0 1px 0 9px;
  padding: 1px 0 0 4px;
  background: #282828;
}

.scene-tools .search {
  width: 114px;
  height: 8px;
  margin-left: auto;
}

.search .icon-6 {
  margin-left: auto;
}

.draw-modes,
.view-modes {
  display: flex;
  gap: 0.200px;
  margin-left: 7px;
}

.view-modes {
  margin-left: 12px;
  gap: 0.500px;
}

.viewport {
  height: 94px;
  position: relative;
}

.scene-view {
  display: block;
  width: 100%;
  height: 94px;
}

.grid-line {
  fill: none;
  stroke: #aaa;
  stroke-width: 0.5;
  opacity: 0.28;
}

.gizmo-text {
  fill: #d4d4d4;
  font-size: 6px;
}

.tool-overlay {
  width: 21.500px;
  height: 92px;
  position: absolute;
  left: 0.500px;
  top: 1px;
  display: flex;
  flex-direction: column;
  align-items: center;
  gap: 1px;
  background: #11161c;
}

.tool-overlay .handle {
  width: 8px;
  height: 1px;
  margin-top: 3px;
  background: #333a40;
}

.pick {
  display: flex;
  align-items: center;
  gap: 2px;
  margin: 7px 0 4px;
}

.tool-overlay .tool {
  width: 19px;
  height: 9.600px;
}

.edit-overlay {
  position: absolute;
  left: 1px;
  top: 80px;
  display: flex;
  padding: 1px 1px 1px 6px;
  background: #3c3c3c;
  border: 1px solid #0c0c0c;
}

.edit-overlay .tool {
  width: 16.600px;
  height: 9px;
}

.edit-overlay .on {
  border-left: 1px solid #30455c;
}

.edit-overlay .plain {
  background: none;
}

/* PlayMaker editor */
.playmaker {
  flex: 1;
  min-height: 0;
  display: flex;
  flex-direction: column;
  padding-top: 1.500px;
}

.playmaker .tab {
  padding-right: 6px;
}

.playmaker .tab + .tab {
  padding-right: 8px;
}

.playmaker-body {
  flex: 1;
  min-height: 0;
  display: flex;
}

.graph-pane {
  width: 402.500px;
  flex: none;
  display: flex;
  flex-direction: column;
  background: #383838;
}

.graph-bar {
  height: 11.500px;
  display: flex;
  align-items: center;
  gap: 5px;
  padding: 0.500px 6.500px 0 5px;
  background: #3b3b3b;
  border-bottom: 1px solid #232323;
}

.drop {
  display: flex;
  align-items: center;
  justify-content: space-between;
}

.drop.object {
  width: 52px;
}

.drop.fsm {
  width: 46px;
}

.minimap-toggle {
  margin-left: auto;
}

.graph-row {
  flex: 1;
  min-height: 0;
  display: flex;
}

.graph {
  flex: 1;
  position: relative;
  background: #3f3f3f;
}

.graph h1 {
  margin: 3px 0 0 2px;
  font-size: 16.100px;
  line-height: 18px;
  font-weight: 600;
  color: #7c7c7c;
}

.links {
  width: 398px;
  height: 484px;
  position: absolute;
  left: 0;
  top: 0;
}

.link {
  fill: none;
  stroke: #1c1c1c;
  stroke-width: 0.9;
}

.link.faint {
  stroke: #2d2d2d;
  stroke-width: 0.7;
}

.head {
  fill: #171717;
}

.head.faint {
  fill: #2a2a2a;
}

.minimap {
  width: 57px;
  height: 42px;
  position: absolute;
  right: 3px;
  top: 1px;
}

.minimap rect {
  fill: #41464a;
}

.minimap path {
  stroke: #5e6265;
  stroke-width: 2.5;
}

.start {
  width: 67px;
  height: 8px;
  position: absolute;
  left: 71px;
  top: 93px;
  padding-top: 0.500px;
  background: #262626;
  color: #d5d5d5;
  text-align: center;
  font-weight: 600;
}

.node {
  display: flex;
  flex-direction: column;
  position: absolute;
  text-align: center;
  background: #4b4b4b;
  color: #eee;
}

.node b {
  height: 9px;
  line-height: 10px;
}

.node span {
  height: 7.700px;
  border-top: 0.500px solid #777;
  background: #9c9c9c;
  color: #222;
}

.set-default { left: 71px; top: 117px; width: 69px; }
.lying-bool { left: 214px; top: 103px; width: 50px; }
.state-one { left: 307px; top: 103px; width: 50px; }

.state-one::after {
  content: "";
  width: 2px;
  height: 5px;
  position: absolute;
  right: 0;
  top: 2px;
  background: #aaa;
}

.calculation {
  left: 280px;
  top: 166px;
  width: 80px;
  border: 1.500px solid #416899;
  border-width: 1.500px 2px;
}

.graph-row .thumb {
  height: 220px;
  margin: 58px 0 0;
}

.scroll-x {
  height: 6px;
  display: flex;
  align-items: center;
  justify-content: space-between;
  padding: 0 7px 0 2px;
  background: #303030;
}

.scroll-x .thumb {
  width: 152px;
  height: 4px;
  margin-right: 20px;
  border-radius: 2px;
  background: #5c5c5c;
}

.debug-bar {
  height: 11px;
  display: flex;
  align-items: center;
  padding: 0.500px 0 0 2px;
  background: #3b3b3b;
  border-top: 1px solid #262626;
}

.ok {
  width: 6.500px;
  height: 6.500px;
  margin-right: 1px;
  border-radius: 50%;
  background: #25a12b;
}

.debug {
  display: flex;
  align-items: center;
  gap: 2px;
  margin: 0 14px 0 10px;
}

.debug-bar .icon-6 {
  margin-right: 14px;
}

.state-pane {
  flex: 1;
  display: flex;
  flex-direction: column;
  background: #383838;
  border-left: 1px solid #222;
}

.state-tabs {
  height: 11.500px;
  display: flex;
  gap: 1px;
  background: #242424;
}

.state-tabs span {
  flex: 1;
  padding-top: 1.500px;
  background: #393939;
  text-align: center;
}

.state-tabs .active {
  background: #4b4b4b;
}

.state-name {
  display: flex;
  align-items: center;
  gap: 2px;
  padding: 1px 3px 0 2px;
}

.state-name .field {
  flex: 1;
  height: 9px;
  padding: 1px;
  background: #2a2a2a;
}

.swatch {
  width: 7px;
  height: 7px;
  margin-right: 1px;
  background: #818181;
}

.description {
  height: 9px;
  margin: 1px 1px 2px 2px;
  padding: 1px 0 0 3px;
  background: #2e2e2e;
  color: #737373;
}

.action-list {
  flex: 1;
}

.action {
  height: 46.500px;
  display: flex;
  flex-direction: column;
  border-top: 1px solid #262626;
}

.action:last-child {
  border-bottom: 1px solid #262626;
}

.action-head {
  height: 12.500px;
  display: flex;
  align-items: center;
  gap: 3px;
  padding: 0.500px 3px 0 2px;
  background: #3c3c3c;
  font-weight: 600;
}

.action-head .arrow {
  color: #666;
}

.action-head .help {
  margin-left: auto;
}

.check {
  width: 6px;
  height: 6px;
  display: flex;
  background: #252525;
  color: #e5e5e5;
}

.action-row {
  height: 10px;
  display: flex;
  align-items: center;
  padding: 0 2px 0 1.500px;
}

.action-row label {
  width: 136.500px;
  padding-top: 1.500px;
}

.slider {
  width: 161px;
  height: 1px;
  background: #5d5d5d;
}

.slider i {
  display: block;
  width: 5px;
  height: 5px;
  margin-left: 48px;
  border-radius: 50%;
  background: #a2a2a2;
  transform: translateY(-2px);
}

.amount {
  width: 36px;
  height: 9px;
  margin: 0 2px 0 1px;
  padding: 1px 0 0 1px;
  background: #282828;
}

.variable {
  width: 7px;
  height: 7px;
  background: #555;
  color: #888;
  line-height: 6px;
  text-align: center;
}

.select {
  height: 7.500px;
  flex: 1;
  display: flex;
  align-items: center;
  justify-content: space-between;
  padding: 0 2px;
  background: #4f4f4f;
}

.select span {
  padding-top: 1.500px;
}

.action-row .select {
  flex: none;
  width: 206px;
  margin-left: 2px;
  padding-left: 1px;
}

.value {
  height: 9px;
  margin: 1.500px 2px 0 1px;
  padding: 0.500px 0 0 1.500px;
  border: 0.500px solid #2b2b2b;
  background: #353535;
  color: #696969;
}

.state-options {
  height: 14px;
  display: flex;
  align-items: center;
  gap: 2.500px;
  padding: 0.500px 2px 0 3px;
  background: #3c3c3c;
}

.state-options .box {
  width: 6px;
  height: 6px;
  background: #282828;
}

.state-options .box + span + .box {
  margin-left: 2px;
}

.state-options button {
  width: 48px;
  height: 8px;
  margin-left: auto;
  background: #545454;
  color: #d5d5d5;
  line-height: 8px;
}

.state-footer {
  height: 11px;
  display: flex;
  background: #3b3b3b;
  border-top: 1px solid #2b2b2b;
}

.state-footer span {
  width: 52px;
  padding-top: 1.500px;
  text-align: center;
}

.state-footer span + span {
  flex: 1;
  padding-right: 3px;
  border-left: 1px solid #2b2b2b;
}

/* Global variables */
.globals {
  flex: 1;
  min-width: 0;
  display: flex;
  flex-direction: column;
  background: #383838;
}

.globals .tab {
  padding: 1.500px 8px 0 5px;
}

.globals .tools .search {
  flex: 1;
  margin-right: 4px;
}

.refresh {
  margin-right: 4px;
  padding-top: 1px;
}

.globals-head,
.global {
  height: 11px;
  display: grid;
  grid-template-columns: 1fr 30px 58px 8px;
  align-items: center;
  padding: 0 3px 0 2.500px;
}

.globals-head {
  height: 12px;
  background: #3e3e3e;
}

.globals-head span,
.global span {
  padding-top: 1px;
}

.globals-head span:nth-child(2),
.global span:nth-child(2) {
  text-align: right;
}

.globals-head span:nth-child(3) {
  padding-left: 6px;
}

.globals-list {
  flex: 1;
}

.global .select {
  margin: 0 1px 0 5px;
  padding-left: 1px;
}

.remove {
  width: 7px;
  height: 7px;
  margin-left: 1px;
  background: #4d4d4d;
  stroke: #999;
  stroke-width: 0.6;
}

.new-variable {
  height: 10px;
  display: flex;
  align-items: center;
  padding: 0 2px;
}

.new-variable label {
  width: 50px;
  padding-top: 1.500px;
}

.new-variable .field {
  flex: 1;
  height: 8px;
  background: #282828;
}

.add {
  width: 16px;
  margin-left: 3px;
  background: #404040;
  color: #777;
  text-align: center;
}

.note {
  height: 19px;
  display: flex;
  align-items: center;
  gap: 2px;
  margin: 3px 2px 2px;
  padding-left: 1px;
  background: #414141;
  border: 1px solid #2c2c2c;
  color: #a5a5a5;
  font-size: 5.050px;
}

.note span {
  padding-top: 1px;
}

.note svg {
  width: 14px;
  height: 14px;
}

.status-bar {
  height: 11px;
  flex: none;
  display: flex;
  align-items: center;
  gap: 2px;
  padding: 1px 4px 0 1px;
  background: #141414;
}

.status-bar span {
  padding-top: 1px;
}

.status-icons {
  display: flex;
  gap: 6px;
  margin-left: auto;
}

/* Windows taskbar */
.taskbar {
  height: 24px;
  flex: none;
  display: flex;
  align-items: center;
  padding-left: 10px;
  border-top: 0.500px solid #343a42;
  background: linear-gradient(90deg, #1a2228 0, #1a2228 250px, #151f42 330px, #191d45 440px, #1c1e42 620px, #101f55 790px, #10205a 860px, #1c2330 910px, #1b222c 100%);
  color: #eee;
  font-family: "Open Sans", sans-serif;
  font-size: 5.700px;
}

.windows {
  width: 12px;
  height: 12px;
  margin-right: 6.500px;
}

.task-search {
  width: 109px;
  height: 16px;
  display: flex;
  align-items: center;
  gap: 5px;
  margin-right: 2.500px;
  padding-left: 6px;
  border: 0.500px solid #444c53;
  border-radius: 8px;
  background: #333c43;
  font-size: 7.500px;
}

.task {
  width: 20px;
  height: 21px;
  display: flex;
  align-items: center;
  justify-content: center;
  margin-right: 2px;
  border-radius: 2px;
  position: relative;
}

.task svg {
  width: 13px;
  height: 13px;
}

.task.light svg {
  width: 10px;
  height: 10px;
  color: #bfc8ce;
}

.current {
  background: #2a3238;
}

.current::after,
.open::after {
  content: "";
  width: 3px;
  height: 1.500px;
  border-radius: 1px;
  background: #9a9fa5;
  position: absolute;
  bottom: 0;
}

.current::after {
  width: 8px;
  background: #62c9f2;
}

.tray {
  display: flex;
  align-items: center;
  margin-left: auto;
  padding-right: 7px;
}

.tray svg {
  width: 9px;
  height: 9px;
  fill: none;
  stroke: #e0e0e0;
  stroke-width: 0.9;
  margin-right: 3px;
}

.tray svg:first-child {
  margin-right: 7px;
}

.tray .mic {
  margin-right: 7px;
  stroke: #68bcbd;
}

.date {
  width: 34px;
  margin-right: 3px;
  text-align: right;
  display: flex;
  flex-direction: column;
}

.cursor {
  width: 6.500px;
  height: 10px;
  position: absolute;
  left: 674px;
  top: 605.500px;
}
```
FILE: script.js
```
const hierarchy = [
  { name: 'Directional Light' },
  { name: 'PlayMakerGUI' },
  { name: 'Later', arrow: true },
  { name: 'Building', arrow: true },
  { name: 'PC', arrow: true, fsm: true, cls: 'off' },
  { name: 'Player', arrow: true, fsm: true },
  { name: 'Array_Base', fsm: true },
  { name: 'Character_Data_Creator', fsm: true },
  { name: 'Character_Prefabs', arrow: true },
  { name: 'Characters_PrefabArray', fsm: true },
  { name: 'Buttons_Canvas', arrow: true },
  { name: 'Deneme_SpawnPoint' },
  { name: 'Days_Shuffle_Array', fsm: true },
  { name: 'Character_SpawnManager', fsm: true },
  { name: 'Day_Limit_Checker', fsm: true },
  { name: 'NextDayButton', fsm: true },
  { name: 'World Space Resources', arrow: true, cls: 'prefab' },
  { name: 'Focus Monitor on/off', fsm: true },
  { name: 'CompareSystem', fsm: true, cls: 'selected' }
];

// [depth, name, state] - state: c = collapsed, o = open, empty = no arrow
const folders = [
  [0, 'Assets', 'c'], [0, 'Packages', 'o'], [1, 'AI Navigation', 'c'], [1, 'Burst', 'c'],
  [1, 'Cinemachine', 'c'], [1, 'Collections', 'c'], [1, 'Custom NUnit', 'c'], [1, 'Input System', 'o'],
  [2, 'DocCodeSamples.Tests'], [2, 'InputSystem', 'o'], [3, 'Actions', 'c'], [3, 'Controls', 'c'],
  [3, 'Devices', 'c'], [3, 'Editor', 'c'], [3, 'Events'], [3, 'Plugins', 'o'],
  [4, 'Android'], [4, 'DualShock'], [4, 'EnhancedTouch'], [4, 'HID'], [4, 'InputForUI'], [4, 'iOS'],
  [4, 'Linux'], [4, 'OnScreen'], [4, 'OSX'], [4, 'PlayerInput'], [4, 'Steam'], [4, 'Switch'],
  [4, 'UI'], [4, 'UnityRemote'], [4, 'Users'], [4, 'WebGL'], [4, 'XInput'], [4, 'XR', 'c']
];

const files = [
  'CharacterCustomizer', 'DenemeScene', 'DreamOS - 90s Desktop OS UI', 'Gizmos', 'Materials',
  'net.fabrejean', 'PlayMaker', 'PlayMaker ArrayMaker', 'PlayMaker Custom Actions',
  'PlayMaker Custom Templates', 'PlayMaker DataMaker', 'PlayMaker PathFinding', 'PlayMaker Utils',
  'Plugins', 'Resources', 'Scenes', 'Settings', 'TextMesh Pro',
  ['BAŞVURU_FORMU_GAME', 'note'], ['CharacterCustomizer', 'doc'], ['DenemeScene', 'unity'],
  ['InputSystem_Actions', 'actions', true]
];

const actions = ['CRIME', 'DEBT', 'HEALTH', 'MARRIED', 'PLACE', 'TEL', 'WORK'];

const globals = [
  ['Comparing1', '-', 'String'], ['Comparing2', '-', 'String'], ['CurrentDayIndex', 4, 'Int'],
  ['DailyCustomerCount', 4, 'Int'], ['DailyCustomerLimit', 2, 'Int'],
  ['DayCustomerCountTotal', 2, 'Array: Int'], ['GameIsCreated', 2, 'Bool'], ['PointOnPC', 2, 'Bool'],
  ['SelectedChar_INDEX', 19, 'Int'], ['SummonedChar_AGE', 3, 'Int'], ['SummonedChar_CRIME', 3, 'String'],
  ['SummonedChar_DEBT', 3, 'String'], ['SummonedChar_HEALTH', 3, 'String'], ['SummonedChar_HMM', 3, 'Int'],
  ['SummonedChar_ID', 4, 'String'], ['SummonedChar_MARRIED', 3, 'String'], ['SummonedChar_NAME', 4, 'String'],
  ['SummonedChar_NUMBER', 1, 'Int'], ['SummonedChar_PAYTIME', 3, 'Int'], ['SummonedChar_PLACE', 3, 'String'],
  ['SummonedChar_PREFAB', 3, 'GameObject'], ['SummonedChar_RFM', 3, 'String'],
  ['SummonedChar_RISKPOINT', 3, 'Int'], ['SummonedChar_SEX', 3, 'String'],
  ['SummonedChar_TEL', 3, 'String'], ['SummonedChar_WORK', 3, 'String']
];

function icon(name, cls = '') {
  return `<svg class="icon ${cls}"><use href="#${name}"/></svg>`;
}

document.getElementById('hierarchyList').innerHTML =
  `<div class="tree-row scene-row">${icon('down', 'arrow')}${icon('unity', 'icon-7')}<span>DenemeScene*</span>${icon('dots', 'marker')}</div>` +
  hierarchy.map(item => `
    <div class="tree-row ${item.cls || ''}">
      ${icon('right', item.arrow ? 'arrow' : 'arrow none')}
      ${icon(item.cls === 'prefab' ? 'prefab' : 'cube', 'icon-7')}
      <span>${item.name}</span>
      ${item.fsm ? icon('pm-red', 'marker') : ''}
      ${item.cls === 'prefab' ? '<span class="more">›</span>' : ''}
    </div>`).join('');

document.getElementById('projectTree').innerHTML = folders.map(([depth, name, state], i) => `
  <div class="tree-row depth-${depth} ${depth === 0 ? 'strong' : ''} ${i === 0 ? 'selected' : ''}">
    ${icon(state === 'o' ? 'down' : 'right', state ? 'arrow' : 'arrow none')}
    ${icon(state === 'o' ? 'folder-open' : 'folder')}
    <span>${name}</span>
  </div>`).join('');

document.getElementById('fileList').innerHTML = files.map(file => {
  const [name, type, arrow] = Array.isArray(file) ? file : [file, 'folder'];
  return `<div class="tree-row">${icon('right', arrow ? 'arrow' : 'arrow none')}${icon(type)}<span>${name}</span></div>`;
}).join('');

document.getElementById('actionList').innerHTML = actions.map(name => `
  <div class="action">
    <div class="action-head">
      ${icon('down', 'icon-4 arrow')}${icon('doc')}<i class="check">${icon('check')}</i>
      <span>Random Weighted Bool</span>${icon('help', 'icon-5 help')}${icon('gear', 'icon-6')}
    </div>
    <div class="action-row"><label>Weights</label><div class="slider"><i></i></div><div class="amount">0.31</div><div class="variable">=</div></div>
    <div class="action-row"><label>Store Result</label><div class="select"><span>False_${name}</span>${icon('down', 'icon-4')}</div></div>
    <div class="value">False</div>
  </div>`).join('');

document.getElementById('globalsList').innerHTML = globals.map(([name, used, type]) => `
  <div class="global">
    <span>${name}</span><span>${used}</span>
    <div class="select"><span>${type}</span>${icon('down', 'icon-4')}</div>
    <svg class="remove" viewBox="0 0 7 7"><path d="M1.500 1.500l4 4M5.500 1.500l-4 4"/></svg>
  </div>`).join('');

// Small shortcuts on the in-game desktop
let shortcuts = '';
for (let row = 0; row < 7; row++) {
  for (let col = 0; col < (row < 2 ? 3 : 2); col++) {
    const x = 573.500 + col * 6.800;
    const y = 90.500 + row * 7;
    shortcuts += `<rect x="${x}" y="${y}" width="2.800" height="2.600" fill="${(row + col) % 3 ? '#d3e5e1' : '#234a4b'}"/>
      <rect x="${x - 0.500}" y="${y + 3.500}" width="4" height="0.800" fill="#a7d3ca"/>`;
  }
}
document.getElementById('desktopIcons').innerHTML = shortcuts;
```
